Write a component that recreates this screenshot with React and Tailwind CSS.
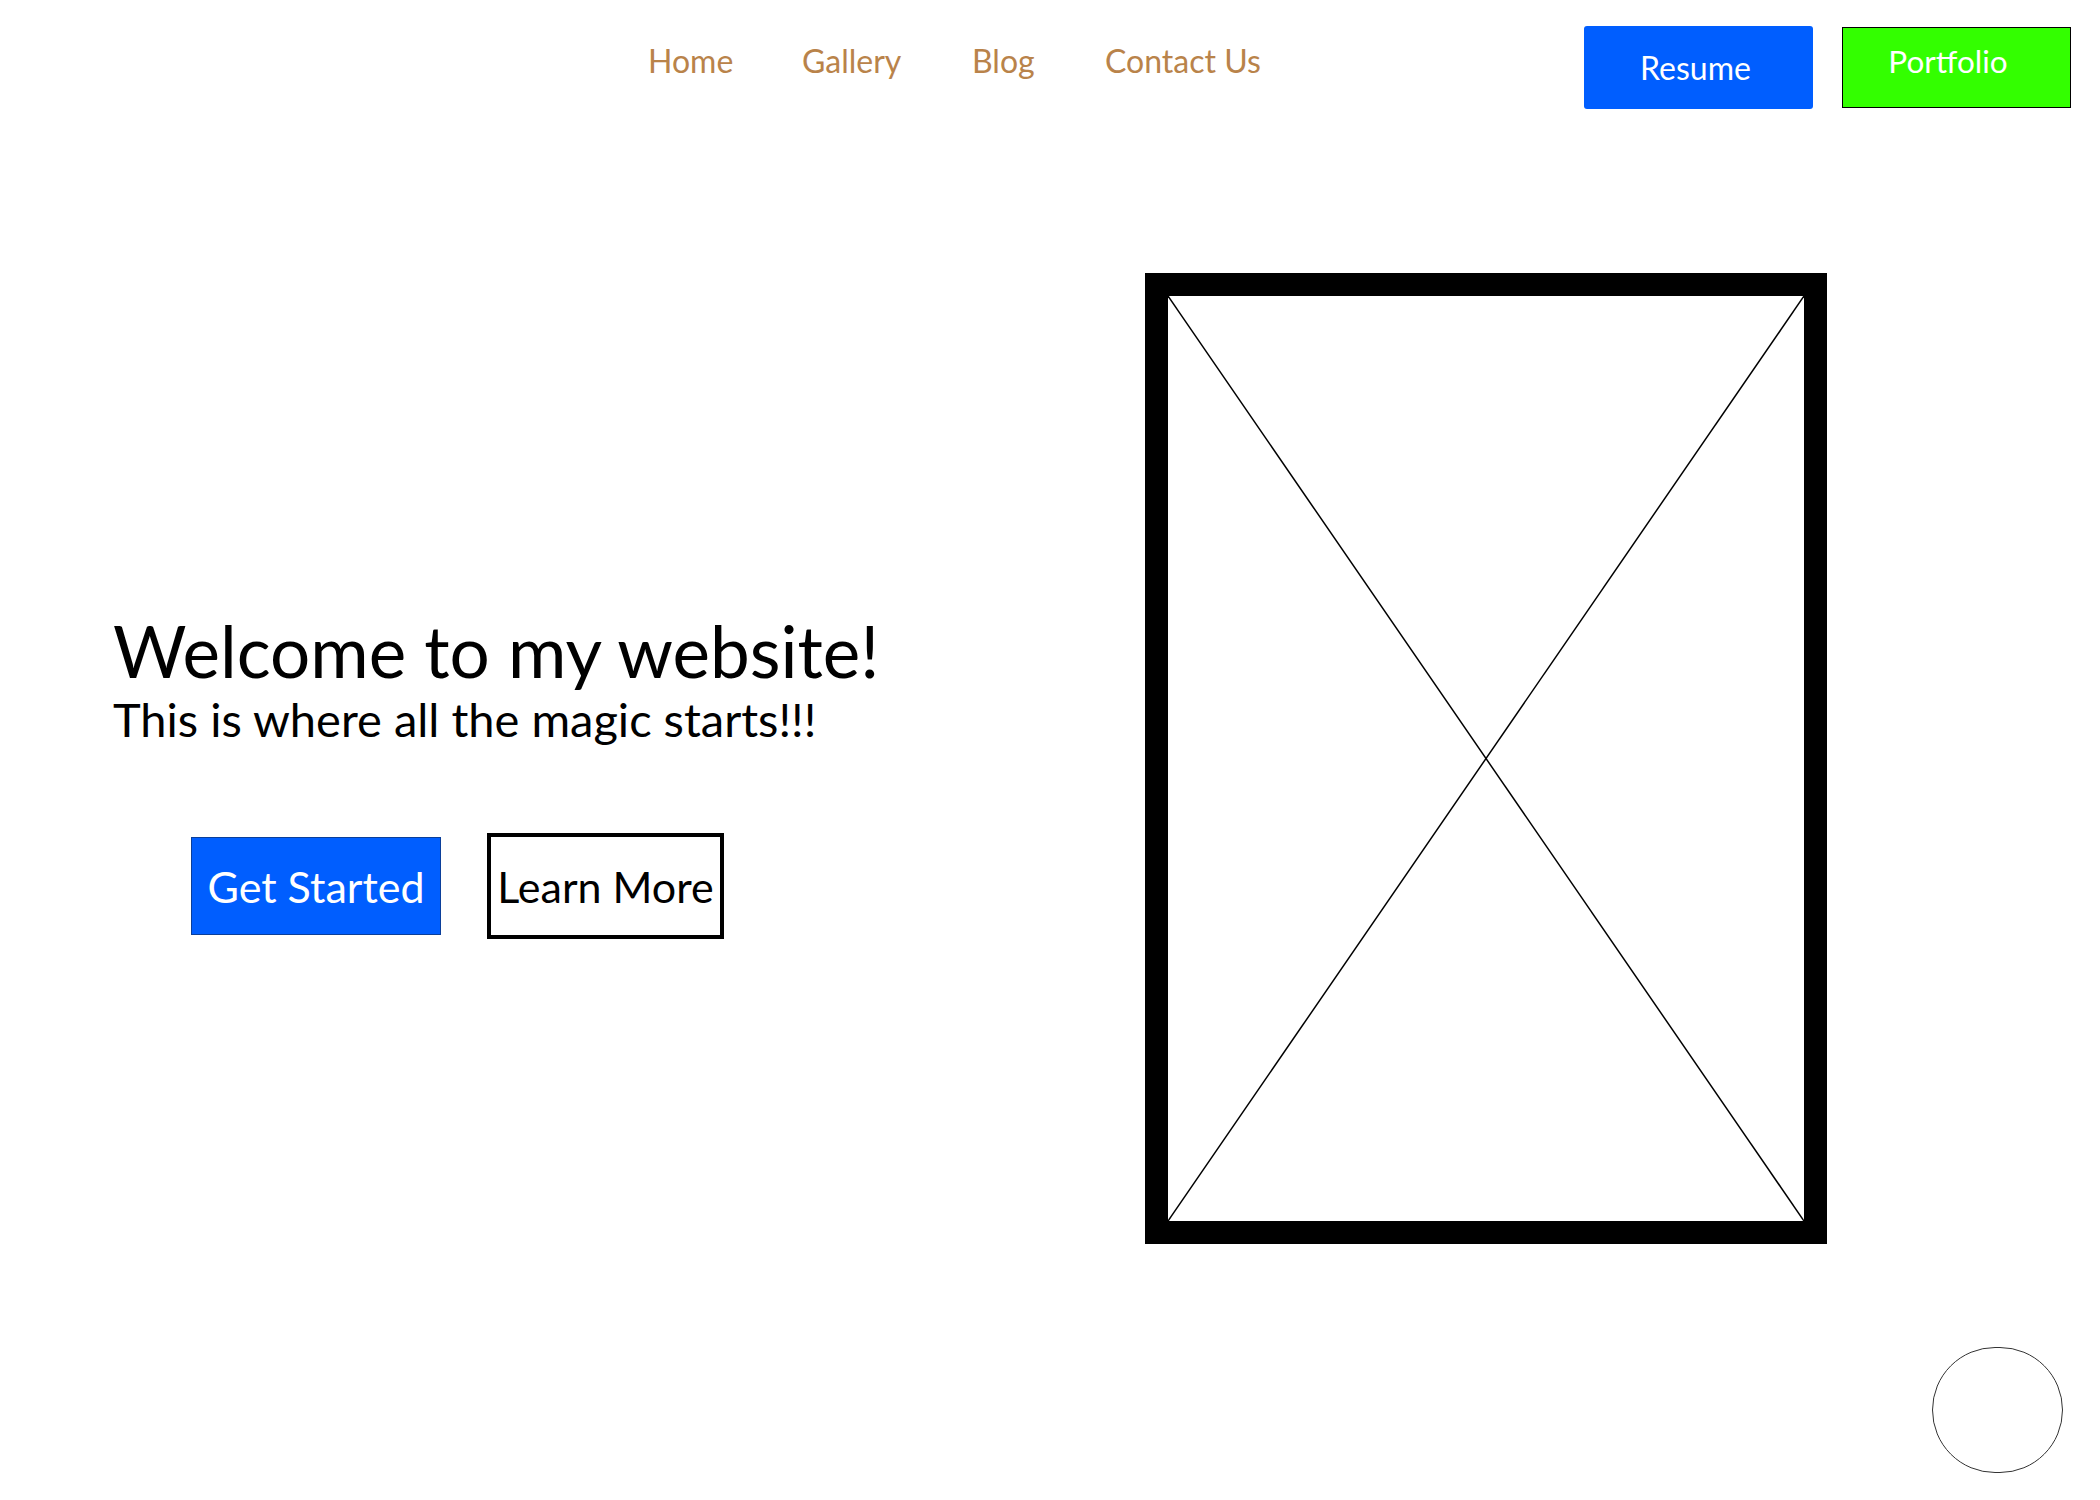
const navLinks = [
  { label: "Home", width: "w-[154px]" },
  { label: "Gallery", width: "w-[170px]" },
  { label: "Blog", width: "w-[133px]" },
  { label: "Contact Us", width: "w-auto" },
];

const App = () => {
  return (
    <div className="relative w-[2100px] h-[1500px] bg-white overflow-hidden font-['Lato','Open_Sans',sans-serif]">
      {/* Header */}
      <header className="flex items-start h-[120px]">
        <nav className="flex ml-[648px] mt-[45px]">
          {navLinks.map((link) => (
            <a
              key={link.label}
              href="#"
              className={`${link.width} text-[32px] leading-none text-[#b9834a]`}
            >
              {link.label}
            </a>
          ))}
        </nav>

        <div className="flex items-start ml-auto mr-[29px] gap-[29px]">
          <a
            href="#"
            className="mt-[26px] w-[229px] h-[83px] flex items-center justify-center pr-[6px] bg-[#005eff] rounded-[3px] text-white text-[32px] leading-none"
          >
            Resume
          </a>
          <a
            href="#"
            className="mt-[27px] w-[229px] h-[81px] flex items-center justify-center pb-[12px] pr-[17px] bg-[#33ff00] border border-black text-white text-[31.5px] leading-none"
          >
            Portfolio
          </a>
        </div>
      </header>

      {/* Hero */}
      <main className="flex items-start">
        <div className="w-[1145px] pl-[113px] pt-[495px]">
          <h1 className="text-[71px] leading-none text-black">
            Welcome to my website!
          </h1>
          <p className="mt-[10px] text-[47px] leading-none text-black">
            This is where all the magic starts!!!
          </p>

          <div className="flex items-center mt-[90px] ml-[78px] gap-[46px]">
            <a
              href="#"
              className="w-[250px] h-[98px] flex items-center justify-center bg-[#005eff] border border-[#0b3f9a] text-white text-[43px] leading-none"
            >
              Get Started
            </a>
            <a
              href="#"
              className="w-[237px] h-[106px] flex items-center justify-center bg-white border-4 border-black text-black text-[43px] leading-none"
            >
              Learn More
            </a>
          </div>
        </div>

        {/* Image placeholder */}
        <div className="mt-[153px] w-[682px] h-[971px] border-[23px] border-black bg-white">
          <svg
            className="block w-full h-full"
            viewBox="0 0 636 925"
            preserveAspectRatio="none"
          >
            <line x1="0" y1="0" x2="636" y2="925" stroke="black" strokeWidth="1.5" />
            <line x1="636" y1="0" x2="0" y2="925" stroke="black" strokeWidth="1.5" />
          </svg>
        </div>
      </main>

      {/* Floating circle */}
      <div className="absolute left-[1932px] top-[1347px] w-[131px] h-[126px] rounded-full border border-[#333]" />
    </div>
  );
};

export default App;
